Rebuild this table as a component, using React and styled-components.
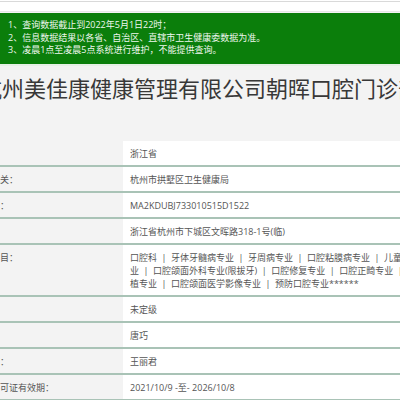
import React from "react";
import styled, { createGlobalStyle } from "styled-components";

const notices = [
  "1、查询数据截止到2022年5月1日22时；",
  "2、信息数据结果以各省、自治区、直辖市卫生健康委数据为准。",
  "3、凌晨1点至凌晨5点系统进行维护，不能提供查询。",
];

const rows = [
  { label: "省份：", value: "浙江省" },
  { label: "登记机关：", value: "杭州市拱墅区卫生健康局" },
  { label: "登记号：", value: "MA2KDUBJ733010515D1522" },
  { label: "地址：", value: "浙江省杭州市下城区文晖路318-1号(临)" },
  {
    label: "诊疗科目：",
    lines: [
      ["口腔科", "牙体牙髓病专业", "牙周病专业", "口腔粘膜病专业", "儿童口腔专"],
      ["业", "口腔颌面外科专业(限拔牙)", "口腔修复专业", "口腔正畸专业", "口腔种"],
      ["植专业", "口腔颌面医学影像专业", "预防口腔专业******"],
    ],
  },
  { label: "级别：", value: "未定级" },
  { label: "法人：", value: "唐巧" },
  { label: "负责人：", value: "王丽君" },
  { label: "执业许可证有效期：", value: "2021/10/9 -至- 2026/10/8" },
];

const App = () => {
  return (
    <>
      <GlobalStyle />
      <TopBar />
      <Page>
        <Notice>
          {notices.map((n) => (
            <NoticeLine key={n}>{n}</NoticeLine>
          ))}
        </Notice>
        <Title>杭州美佳康健康管理有限公司朝晖口腔门诊部</Title>
        <Table>
          {rows.map((row) => (
            <Row key={row.label}>
              <Label>{row.label}</Label>
              <Value>
                {row.lines
                  ? row.lines.map((line, i) => (
                      <Line key={i}>
                        {line.map((item, j) => (
                          <React.Fragment key={item}>
                            {j > 0 && <Sep>|</Sep>}
                            {item}
                          </React.Fragment>
                        ))}
                        {i < row.lines.length - 1 && <Sep>|</Sep>}
                      </Line>
                    ))
                  : row.value}
              </Value>
            </Row>
          ))}
        </Table>
      </Page>
    </>
  );
};

export default App;

//style
const GlobalStyle = createGlobalStyle`
  html, body {
    margin: 0;
    padding: 0;
    overflow: hidden;
    background: #f3f3f3;
    font-family: "Open Sans", "Noto Sans CJK SC", sans-serif;
  }
  body {
    border-top: 1px solid #ffffff;
  }
`;

const TopBar = styled.div`
  height: 9px;
  background: #ffffff;
  border-top: 1px solid #d9d9d9;
  border-bottom: 1px solid #e8e8e8;
  margin-bottom: 1px;
`;

const Page = styled.div`
  width: 680px;
  margin-left: -40px;
`;

const Notice = styled.div`
  background: #0b7e0b;
  color: #eef7ee;
  padding: 6px 0 7px 48px;
  font-size: 9px;
  border-bottom: 2px solid #e6f0e6;
`;

const NoticeLine = styled.div`
  line-height: 12.5px;
  white-space: nowrap;
`;

const Title = styled.h1`
  margin: 0;
  padding: 6px 0 0 20px;
  height: 75px;
  box-sizing: border-box;
  font-size: 22px;
  line-height: 30px;
  font-weight: normal;
  color: #383838;
  white-space: nowrap;
  font-family: "Noto Sans CJK SC", sans-serif;
`;

const Table = styled.div`
  display: flex;
  flex-direction: column;
`;

const Row = styled.div`
  display: grid;
  grid-template-columns: 163px 1fr;
  border-bottom: 2px solid #a9c3b6;
  font-size: 9px;
  color: #555555;
`;

const Label = styled.div`
  background: #f3f3f3;
  padding: 6px 0 5px 13px;
  line-height: 13px;
  white-space: nowrap;
`;

const Value = styled.div`
  background: #ffffff;
  padding: 6px 0 5px 7px;
  line-height: 13px;
  white-space: nowrap;
`;

const Line = styled.div`
  white-space: nowrap;
`;

const Sep = styled.span`
  margin: 0 4.5px;
`;
